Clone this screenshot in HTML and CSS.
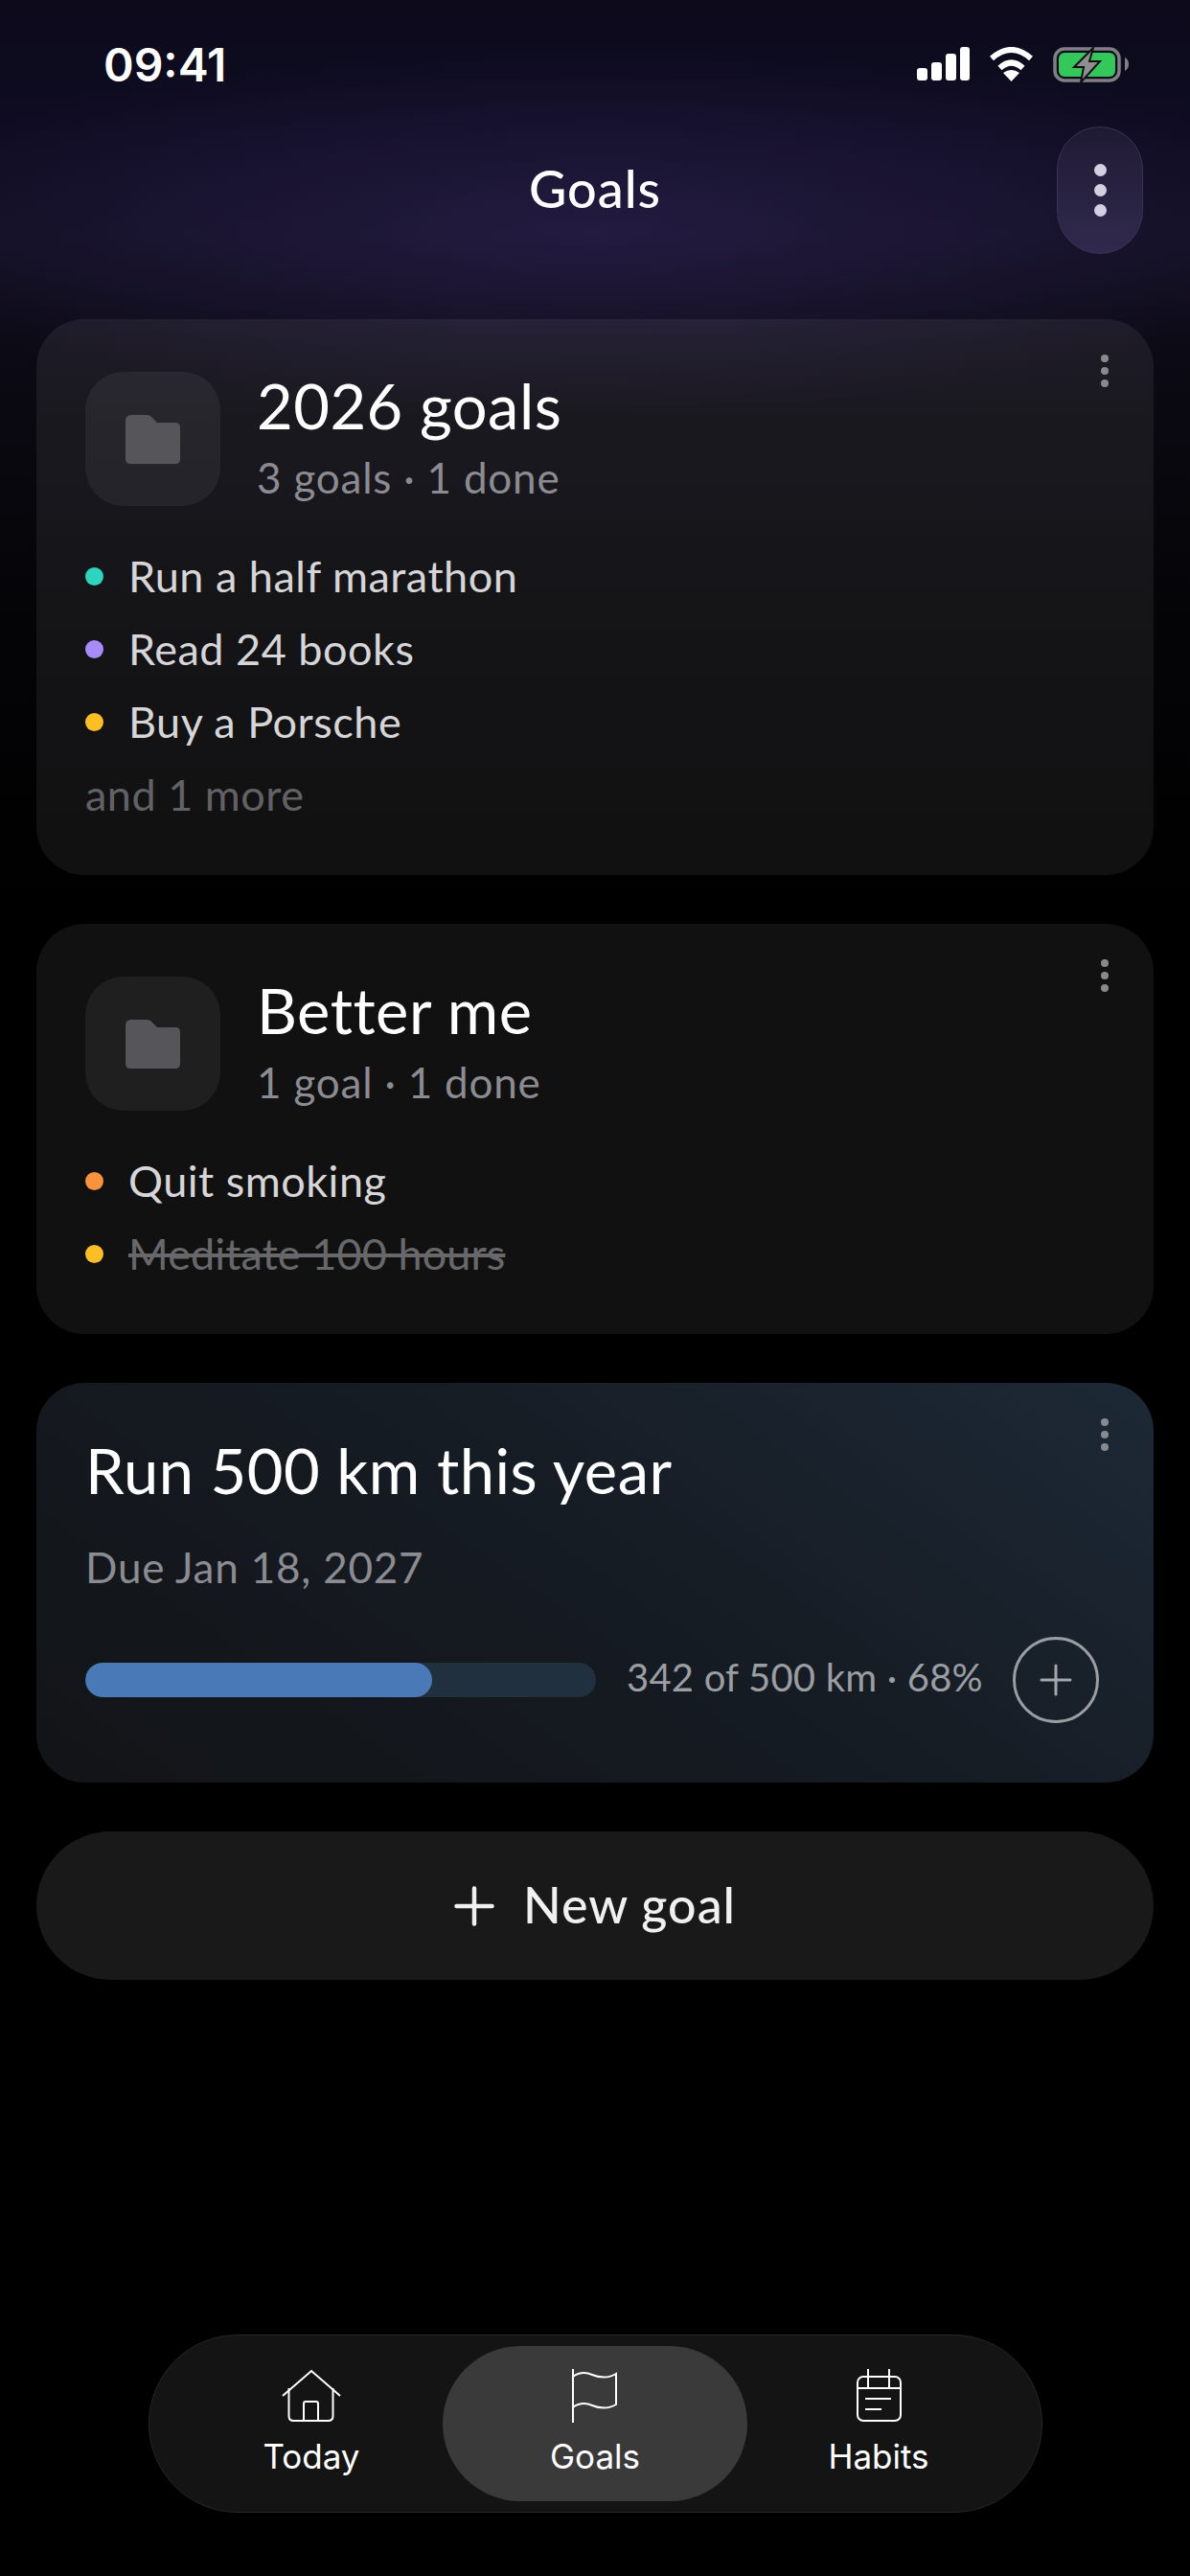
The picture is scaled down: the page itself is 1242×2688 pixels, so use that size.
FILE: index.html
```html
<!DOCTYPE html>
<html lang="en">
<head>
    <meta charset="utf-8">
    <meta name="viewport" content="width=device-width, initial-scale=1">
    <title>Goals</title>
    <link rel="stylesheet" href="styles.css">
</head>
<body>
    <div class="screen">
        <div class="status">
            <span class="time">09:41</span>
            <div class="status-icons">
                <svg width="55" height="35" viewBox="0 0 55 35" fill="#fff">
                    <rect x="0" y="22" width="11" height="13" rx="3"/>
                    <rect x="15" y="16" width="11" height="19" rx="3"/>
                    <rect x="30" y="7" width="11" height="28" rx="3"/>
                    <rect x="45" y="0" width="10" height="35" rx="3"/>
                </svg>
                <svg width="47" height="36" viewBox="0 0 47 36" fill="none" stroke="#fff" stroke-width="6">
                    <path d="M3 12 Q23.5 -6 44 12"/>
                    <path d="M11.5 22 Q23.5 11 35.5 22"/>
                    <path d="M23.5 36 L15 27 Q23.5 21 32 27 Z" fill="#fff" stroke="none"/>
                </svg>
                <svg width="79" height="38" viewBox="0 0 79 38">
                    <rect x="2" y="2" width="67" height="33" rx="10" fill="none" stroke="#808084" stroke-width="3.5"/>
                    <rect x="6" y="6" width="59" height="25" rx="6" fill="#34c759"/>
                    <path d="M75 11 Q79 13 79 18 Q79 23 75 25 Z" fill="#808084"/>
                    <path d="M42 1 L22 21 L32 21 L29 37 L49 15 L38 15 Z" fill="#8e8e93" stroke="#111" stroke-width="2"/>
                </svg>
            </div>
        </div>

        <div class="header">
            <h1 class="page-title">Goals</h1>
            <button class="menu-btn" type="button">
                <i></i><i></i><i></i>
            </button>
        </div>

        <div class="card">
            <div class="kebab"><i></i><i></i><i></i></div>
            <div class="folder-head">
                <div class="folder-box">
                    <svg width="57" height="51" viewBox="0 0 57 51"><path d="M0 6 Q0 0 6 0 H22 Q26 0 28 3 L33 8 H52 Q57 8 57 13 V46 Q57 51 52 51 H5 Q0 51 0 46 Z"/></svg>
                </div>
                <div>
                    <div class="card-title">2026 goals</div>
                    <div class="card-sub">3 goals · 1 done</div>
                </div>
            </div>
            <ul class="goal-list">
                <li><span class="dot teal"></span>Run a half marathon</li>
                <li><span class="dot purple"></span>Read 24 books</li>
                <li><span class="dot yellow"></span>Buy a Porsche</li>
                <li class="more">and 1 more</li>
            </ul>
        </div>

        <div class="card">
            <div class="kebab"><i></i><i></i><i></i></div>
            <div class="folder-head">
                <div class="folder-box">
                    <svg width="57" height="51" viewBox="0 0 57 51"><path d="M0 6 Q0 0 6 0 H22 Q26 0 28 3 L33 8 H52 Q57 8 57 13 V46 Q57 51 52 51 H5 Q0 51 0 46 Z"/></svg>
                </div>
                <div>
                    <div class="card-title">Better me</div>
                    <div class="card-sub">1 goal · 1 done</div>
                </div>
            </div>
            <ul class="goal-list">
                <li><span class="dot orange"></span>Quit smoking</li>
                <li class="done"><span class="dot yellow"></span><s>Meditate 100 hours</s></li>
            </ul>
        </div>

        <div class="card card-run">
            <div class="kebab"><i></i><i></i><i></i></div>
            <div class="card-title">Run 500 km this year</div>
            <div class="card-sub due">Due Jan 18, 2027</div>
            <div class="progress-row">
                <div class="bar"><div class="bar-fill" style="width: 68%"></div></div>
                <span class="progress-text">342 of 500 km · 68%</span>
                <div class="add-btn">
                    <svg width="34" height="34" viewBox="0 0 34 34" stroke="#a3a6aa" stroke-width="3" stroke-linecap="round"><path d="M17 2 V32 M2 17 H32"/></svg>
                </div>
            </div>
        </div>

        <button class="new-goal" type="button">
            <svg width="42" height="42" viewBox="0 0 42 42" stroke="#f0f0f0" stroke-width="4.5" stroke-linecap="round"><path d="M21 2.5 V39.5 M2.5 21 H39.5"/></svg>
            <span>New goal</span>
        </button>

        <div class="tabbar">
            <div class="tab">
                <svg width="62" height="56" viewBox="0 0 62 56" fill="none" stroke="#fff" stroke-width="2">
                    <path d="M1 28 L31 2 L61 28"/>
                    <path d="M7.5 20 V49 Q7.5 54 12.5 54 H48.5 Q53.5 54 53.5 49 V20"/>
                    <path d="M23 54 V36 Q23 34 25 34 H36 Q38 34 38 36 V54"/>
                </svg>
                <span>Today</span>
            </div>
            <div class="tab active">
                <svg width="48" height="56" viewBox="0 0 48 56" fill="none" stroke="#fff" stroke-width="2">
                    <path d="M1 0 V56"/>
                    <path d="M1 8 C8 3 14 3 21 6 C28 9 38 10 46 5 V37 C38 42 28 41 21 38 C14 35 8 35 1 40"/>
                </svg>
                <span>Goals</span>
            </div>
            <div class="tab">
                <svg width="47" height="56" viewBox="0 0 47 56" fill="none" stroke="#fff" stroke-width="2">
                    <rect x="1" y="8" width="45" height="46" rx="6"/>
                    <path d="M1 20 H46 M12 0 V20 M34 0 V20 M9 31 H36 M9 42 H26"/>
                </svg>
                <span>Habits</span>
            </div>
        </div>
    </div>
</body>
</html>
```

FILE: styles.css
```css
* {
    box-sizing: border-box;
}

body {
    margin: 0;
    background: #000;
    color: #fff;
    font-family: "Lato", "Noto Sans", sans-serif;
}

.screen {
    width: 1242px;
    height: 2688px;
    padding: 0 38px;
    display: flex;
    flex-direction: column;
    overflow: hidden;
    background:
        radial-gradient(ellipse 800px 190px at 50% 240px, rgba(44, 34, 80, .65), rgba(44, 34, 80, 0)),
        linear-gradient(180deg, #0c0a1b 0, #0f0c22 150px, #120f22 250px, #0c0a14 360px, #050508 620px, #000 940px);
}

/* status bar */
.status {
    height: 132px;
    padding: 49px 26px 0 70px;
    display: flex;
    justify-content: space-between;
    align-items: flex-start;
}

.time {
    font-family: "Inter", sans-serif;
    font-size: 48px;
    font-weight: 600;
    line-height: 38px;
}

.status-icons {
    display: flex;
    align-items: flex-start;
    gap: 20px;
}

/* header */
.header {
    height: 133px;
    margin: 0 11px 68px;
    display: grid;
    grid-template-columns: 90px 1fr 90px;
    align-items: center;
}

.page-title {
    grid-column: 2;
    margin: 0 0 5px;
    font-size: 54px;
    font-weight: 500;
    letter-spacing: 1px;
    text-align: center;
}

.menu-btn {
    grid-column: 3;
    width: 90px;
    height: 133px;
    margin: 0;
    padding: 0;
    border: 1px solid #3a3452;
    border-radius: 45px;
    background: linear-gradient(180deg, #1f1a33, #312a4e);
    display: flex;
    flex-direction: column;
    align-items: center;
    justify-content: center;
    gap: 8px;
}

.menu-btn i {
    width: 13px;
    height: 13px;
    border-radius: 50%;
    background: #d4d0e2;
}

/* cards */
.card {
    position: relative;
    margin-bottom: 51px;
    padding: 55px 51px 46px;
    border-radius: 50px;
    background: rgba(255, 255, 255, .065);
}

.kebab {
    position: absolute;
    top: 37px;
    right: 47px;
    display: flex;
    flex-direction: column;
    gap: 5px;
}

.kebab i {
    width: 8px;
    height: 8px;
    border-radius: 50%;
    background: #8a8a8e;
}

.folder-head {
    display: flex;
    gap: 38px;
}

.folder-box {
    width: 141px;
    height: 140px;
    border-radius: 40px;
    background: rgba(255, 255, 255, .06);
    display: flex;
    align-items: center;
    justify-content: center;
}

.folder-box svg {
    fill: #55555a;
}

.card-title {
    margin-top: -1px;
    font-size: 65px;
    line-height: 72px;
    letter-spacing: .5px;
    color: #fff;
}

.card-sub {
    margin-top: 9px;
    font-size: 44px;
    line-height: 60px;
    letter-spacing: .8px;
    color: #8b8b92;
}

.goal-list {
    list-style: none;
    margin: 35px 0 0;
    padding: 0;
    font-size: 45px;
    line-height: 76px;
    letter-spacing: .5px;
    color: #d6d6d9;
}

.goal-list li {
    display: flex;
    align-items: center;
}

.dot {
    width: 19px;
    height: 19px;
    margin-right: 26px;
    border-radius: 50%;
}

.teal { background: #2dd4bf; }
.purple { background: #a78bfa; }
.yellow { background: #fbbf24; }
.orange { background: #fb923c; }

.goal-list .more {
    color: #626266;
}

.goal-list .done {
    letter-spacing: .1px;
    color: #68686b;
}

/* the single goal card */
.card-run {
    padding: 56px 57px 62px 51px;
    background: linear-gradient(215deg, #1d2936 0%, #161c24 45%, #121417 100%);
}

.due {
    margin-top: 35px;
}

.progress-row {
    margin-top: 43px;
    display: flex;
    align-items: center;
}

.bar {
    width: 533px;
    height: 36px;
    border-radius: 18px;
    background: #21303f;
    overflow: hidden;
}

.bar-fill {
    height: 100%;
    border-radius: 18px;
    background: #4a79b8;
}

.progress-text {
    margin: 0 0 6px 32px;
    font-size: 40px;
    letter-spacing: .2px;
    color: #9a9da2;
}

.add-btn {
    width: 90px;
    height: 90px;
    margin-left: auto;
    border: 3px solid #9a9da2;
    border-radius: 50%;
    display: flex;
    align-items: center;
    justify-content: center;
}

/* new goal button */
.new-goal {
    height: 155px;
    margin: 0;
    padding: 0;
    border: 0;
    border-radius: 78px;
    background: #191919;
    color: #f0f0f0;
    font-family: inherit;
    font-size: 52px;
    font-weight: 500;
    letter-spacing: 1px;
    display: flex;
    align-items: center;
    justify-content: center;
    gap: 30px;
}

.new-goal span {
    margin-bottom: 4px;
}

/* tab bar */
.tabbar {
    width: 933px;
    height: 186px;
    margin: auto 0 66px;
    align-self: center;
    border-radius: 93px;
    border: 1px solid #262626;
    background: #141414;
    display: flex;
    align-items: center;
    justify-content: center;
}

.tab {
    width: 296px;
    height: 162px;
    padding-top: 24px;
    border-radius: 81px;
    display: flex;
    flex-direction: column;
    align-items: center;
    font-family: "Inter", sans-serif;
    font-size: 35px;
    line-height: 40px;
}

.tab span {
    margin-top: 15px;
}

.tab.active {
    width: 318px;
    margin: 0 -11px;
    background: #3a3a3a;
}
```
